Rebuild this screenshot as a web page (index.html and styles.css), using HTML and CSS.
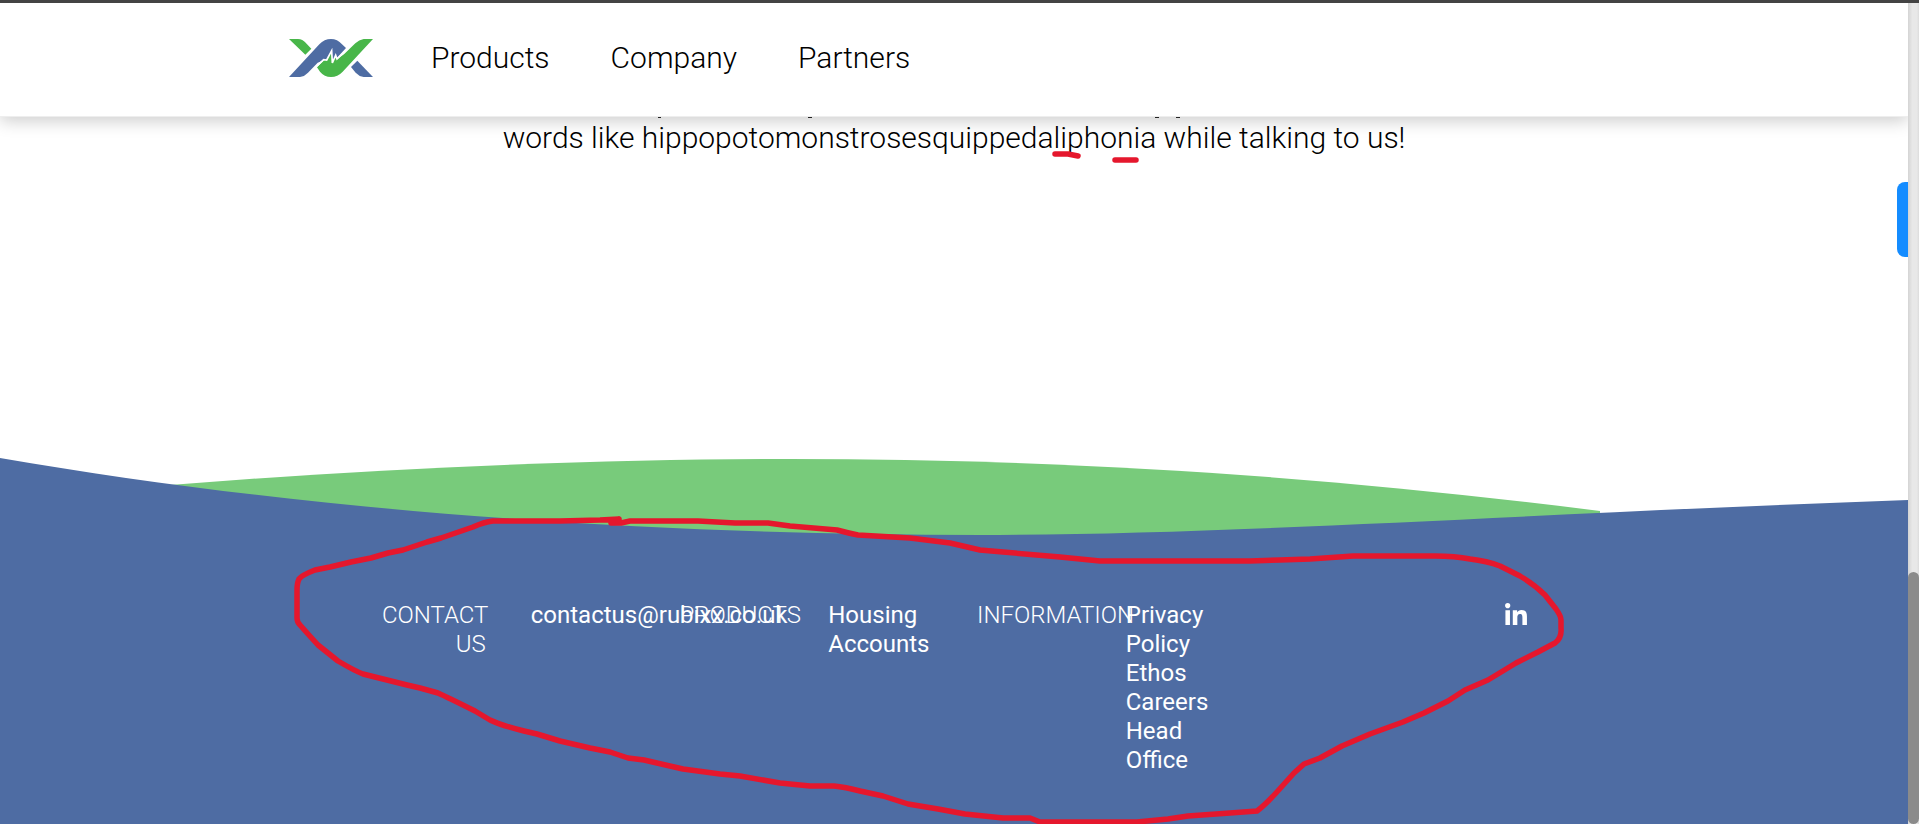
FILE: index.html
```html
<!DOCTYPE html>
<html lang="en">
<head>
<meta charset="utf-8">
<title>Rubixx</title>
<link rel="stylesheet" href="styles.css">
</head>
<body>
<div class="window-edge"></div>
<div class="viewport">
  <div class="page">
    <header class="site-header">
      <a class="logo" href="#" aria-label="Home">
        <svg viewBox="57 57 252 114" aria-hidden="true">
          <path fill="#48b649" d="M57 57H84Q98 58 107 68L124 86 106 104Z"/>
          <path fill="#4e6ca3" d="M57 171H90Q104 169 114 158L143 128 163 120 171 119 185 93 187 128 197 107 201 113 228 84 216 73Q202 57 183 57 163 57 148 73Z"/>
          <path fill="#48b649" d="M309 57H281Q267 59 256 70L222 103 201 117 197 107 187 128 185 93 171 121 163 120 141 142 150 155Q163 171 183 171 203 171 218 155Z"/>
          <path fill="#4e6ca3" d="M262 122L309 171H281Q267 169 257 158L243 141Z"/>
          <path fill="none" stroke="#fff" stroke-width="5" d="M136 142L161 119 170 120 185 92 187 129 197 106 201 117 236 84"/>
        </svg>
      </a>
      <nav class="main-nav">
        <a href="#">Products</a>
        <a href="#">Company</a>
        <a href="#">Partners</a>
      </nav>
    </header>
    <main class="intro">
      <p>words like hippopotomonstrosesquippedaliphonia while talking to us!</p>
    </main>
    <button class="side-tab" aria-label="Open panel"></button>
    <svg class="waves" viewBox="0 0 1908 84" preserveAspectRatio="none" aria-hidden="true">
      <path fill="#78cb7b" d="M170 27C380 10 600 1 790 1 1080 1 1340 20 1600 53L1600 84H170Z"/>
      <path fill="#4e6ca3" d="M0 0C300 52 640 77 980 77 1230 77 1560 54 1908 42V84H0Z"/>
    </svg>
    <footer class="site-footer">
      <div class="footer-grid">
        <h2 class="label">CONTACT US</h2>
        <div class="links"><a href="#">contactus@rubixx.co.uk</a></div>
        <h2 class="label">PRODUCTS</h2>
        <div class="links"><a href="#">Housing</a><a href="#">Accounts</a></div>
        <h2 class="label">INFORMATION</h2>
        <div class="links"><a href="#">Privacy Policy</a><a href="#">Ethos</a><a href="#">Careers</a><a href="#">Head Office</a></div>
        <a class="social" href="#" aria-label="LinkedIn">
          <svg viewBox="0 0 448 512" aria-hidden="true"><path fill="#fff" d="M100.28 448H7.4V148.9h92.88zM53.79 108.1C24.09 108.1 0 83.5 0 53.8a53.79 53.79 0 0 1 107.58 0c0 29.7-24.1 54.3-53.79 54.3zM447.9 448h-92.68V302.4c0-34.7-.7-79.2-48.29-79.2-48.29 0-55.69 37.7-55.69 76.7V448h-92.78V148.9h89.08v40.8h1.3c12.4-23.5 42.69-48.3 87.88-48.3 94 0 111.28 61.9 111.28 142.3V448z"/></svg>
        </a>
      </div>
    </footer>
  </div>
  <div class="scrollbar"><div class="thumb"></div></div>
</div>
<svg class="annotations" viewBox="0 0 1919 824" preserveAspectRatio="none" aria-hidden="true">
  <path stroke="#222" stroke-width="1" d="M658 117.5h3M808 117.5h4M1155 117.5h4M1176 117.5h4"/>
  <g fill="none" stroke="#e5172d" stroke-width="5.5" stroke-linecap="round" stroke-linejoin="round">
    <path d="M1055 154L1068 154 1078 156M1115 160H1136"/>
    <path d="M619 519L600 520 560 521H493Q484 522 473 527L441 538 427 542 403 550 388 553 371 558 351 562 330 567 315 570Q302 575 299 579 297 583 297 590V618Q297 622 300 625L308 634 318 645 338 661Q355 671 363 674L383 679 407 685 420 688 438 693Q447 697 475 711L490 720Q500 725 524 731L537 734 560 741 590 748 610 752 628 758 644 760 683 769 720 774 740 776 780 783 810 786H834Q845 787 860 791L883 796 908 804 938 809 965 814 1003 818H1030L1040 822H1137L1168 819 1188 816 1230 813 1257 811Q1265 805 1276 793L1294 773 1304 764 1320 758 1342 746 1370 734 1403 722 1424 713 1448 701 1465 690 1488 680 1516 663 1538 652 1555 643Q1562 638 1561 628V620Q1561 616 1556 609L1545 595Q1535 585 1520 576L1500 566Q1487 561 1470 559 1455 556 1435 556H1353L1310 559 1280 560 1250 561H1100L1060 557 1003 552 980 550 950 543 910 538 858 535Q848 533 837 530L790 526 768 523H735L698 521H630L621 523H611L619 519"/>
  </g>
</svg>
</body>
</html>
```
FILE: styles.css
```css
* { box-sizing: border-box; }
body {
  margin: 0;
  height: 100vh;
  overflow: hidden;
  display: flex;
  flex-direction: column;
  background: #fff;
  font-family: Roboto, "Liberation Sans", sans-serif;
  font-weight: 300;
  color: #000;
}
a { color: inherit; text-decoration: none; }
.window-edge { height: 3px; background: #444; flex: none; }
.viewport { flex: 1; display: flex; min-height: 0; }
.page {
  position: relative;
  flex: 1;
  display: flex;
  flex-direction: column;
  min-width: 0;
  overflow: hidden;
}
.site-header {
  display: flex;
  align-items: center;
  gap: 58px;
  padding: 35px 24px 38px 289px;
  border-bottom: 1px solid #eee;
  box-shadow: 0 4px 16px rgba(0, 0, 0, 0.2);
}
.logo { display: flex; }
.logo svg { width: 84px; height: 38px; }
.main-nav {
  display: flex;
  gap: 61px;
  font-size: 30px;
  line-height: 40px;
}
.intro {
  padding: 3px 24px 302px;
  text-align: center;
  font-size: 30px;
  line-height: 36px;
}
.intro p { margin: 0; }
.side-tab {
  position: absolute;
  top: 179px;
  right: 0;
  width: 11px;
  height: 75px;
  padding: 0;
  border: 0;
  border-radius: 8px 0 0 8px;
  background: #148cff;
}
.waves { display: block; width: 100%; height: 84px; flex: none; }
.site-footer {
  flex: 1;
  background: #4e6ca3;
  color: #fff;
  padding-top: 59px;
  font-size: 24px;
  line-height: 29px;
  font-weight: 400;
}
.footer-grid {
  display: grid;
  grid-template-columns: repeat(8, 1fr);
  max-width: 1236px;
  margin: 0 auto;
  padding-left: 46px;
}
.label {
  margin: 0;
  padding-right: 45px;
  font-size: 24px;
  font-weight: 300;
  text-align: right;
  min-width: 0;
}
.links {
  display: flex;
  flex-direction: column;
  padding-right: 45px;
  min-width: 0;
}
.social {
  grid-column: 8;
  padding: 2px 45px 0 0;
  display: flex;
  justify-content: flex-end;
  align-items: flex-start;
}
.social svg { width: 22px; height: 25px; }
.scrollbar {
  width: 11px;
  flex: none;
  display: flex;
  flex-direction: column;
  justify-content: flex-end;
  background: linear-gradient(90deg, #d4d4d4, #e8e8e8 40%, #e8e8e8 80%, #dcdcdc);
}
.thumb { height: 252px; border-radius: 6px; background: #8b8b8b; }
.annotations {
  position: absolute;
  inset: 0;
  width: 100%;
  height: 100%;
  pointer-events: none;
}
```
